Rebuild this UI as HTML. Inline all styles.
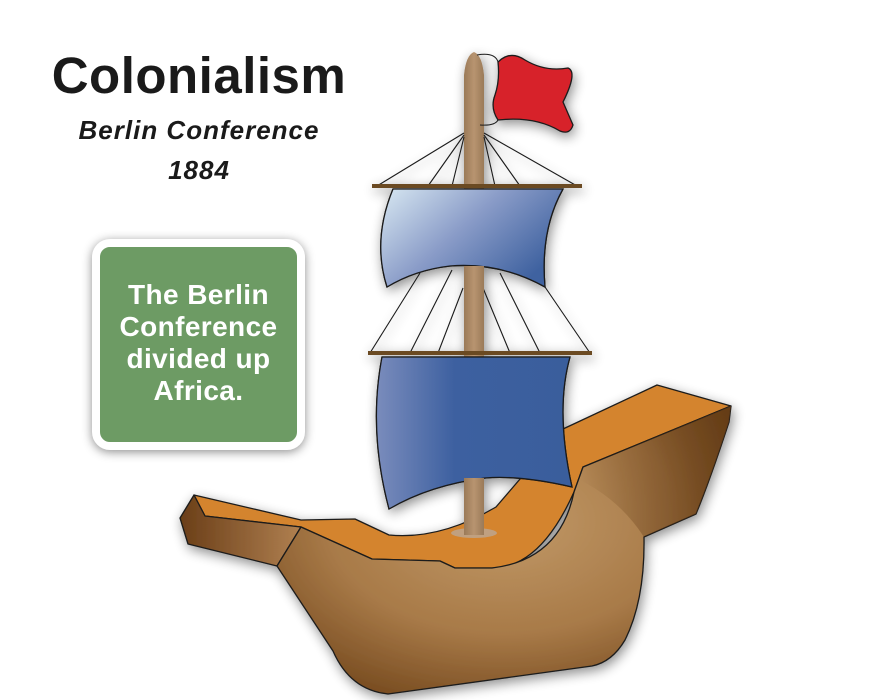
<!DOCTYPE html>
<html><head><meta charset="utf-8"><style>
html,body{margin:0;padding:0;background:#fff;width:884px;height:700px;overflow:hidden;font-family:"Liberation Sans",sans-serif}
.t{position:absolute;left:0;width:398px;text-align:center;color:#1a1a1a;font-weight:bold}
.box{position:absolute;left:92px;top:239px;width:197px;height:195px;border:8px solid #fff;border-radius:18px;background:#6d9b64;box-shadow:0 2px 10px rgba(0,0,0,.45);color:#fff;font-weight:bold;font-size:28px;letter-spacing:0.4px;line-height:32px;text-align:center;box-sizing:content-box}
</style></head><body>
<div class="t" style="top:46px;font-size:51px;letter-spacing:0.5px">Colonialism</div>
<div class="t" style="top:115px;font-size:26px;font-style:italic;letter-spacing:1px">Berlin Conference</div>
<div class="t" style="top:155px;font-size:26px;font-style:italic;letter-spacing:1px">1884</div>
<div class="box"><div style="padding-top:32px">The Berlin<br>Conference<br>divided up<br>Africa.</div></div>
<svg width="884" height="700" style="position:absolute;left:0;top:0">
<defs>
<filter id="sh" x="-20%" y="-20%" width="140%" height="140%"><feGaussianBlur in="SourceAlpha" stdDeviation="6"/><feOffset dx="2" dy="4"/><feComponentTransfer><feFuncA type="linear" slope="0.45"/></feComponentTransfer><feMerge><feMergeNode/><feMergeNode in="SourceGraphic"/></feMerge></filter>
<radialGradient id="hull" cx="0.5" cy="0.4" r="0.65"><stop offset="0" stop-color="#c29a68"/><stop offset="0.6" stop-color="#a87a48"/><stop offset="1" stop-color="#7a4e22"/></radialGradient>
<linearGradient id="bow" x1="0" y1="0" x2="1" y2="0"><stop offset="0" stop-color="#6a3e18"/><stop offset="1" stop-color="#b08050"/></linearGradient>
<linearGradient id="stern" x1="0" y1="0" x2="1" y2="0"><stop offset="0" stop-color="#5e3712" stop-opacity="0"/><stop offset="1" stop-color="#5e3712" stop-opacity="0.8"/></linearGradient>
<linearGradient id="s1" x1="0" y1="0" x2="1" y2="0.6"><stop offset="0" stop-color="#d8e8f2"/><stop offset="0.5" stop-color="#8a9cc8"/><stop offset="1" stop-color="#3f62a0"/></linearGradient>
<linearGradient id="s2" x1="0" y1="0" x2="1" y2="0"><stop offset="0" stop-color="#7a8cbc"/><stop offset="0.4" stop-color="#3d60a0"/><stop offset="1" stop-color="#3a5e9c"/></linearGradient>
<linearGradient id="mast" x1="0" y1="0" x2="1" y2="0"><stop offset="0" stop-color="#9a7a58"/><stop offset="0.5" stop-color="#b89470"/><stop offset="1" stop-color="#9a7a58"/></linearGradient>
</defs>
<g filter="url(#sh)" stroke="#1a1a1a" stroke-width="1.3" stroke-linejoin="round">
<path d="M194,495 L301,520 L355,519 L389,535 Q440,540 496,507 L563,429 L657,385 L731,406 L583,467 L574,492 Q540,568 492,568 L455,568 L440,561 L372,559 L301,527 L205,516 Z" fill="#d4842e"/>
<path d="M205,516 L301,527 L277,566 L188,544 L180,518 L194,495 Z" fill="url(#bow)"/>
<path d="M301,527 L372,559 L440,561 L455,568 L492,568 Q560,560 574,492 L583,467 L731,406 L729,422 Q710,480 696,514 L644,537 Q645,600 625,640 Q612,662 592,666 L388,694 Q350,690 333,651 L277,566 Z" fill="url(#hull)"/>
<path d="M583,467 L731,406 L729,422 Q710,480 696,514 L644,537 Q620,500 580,480 Z" fill="url(#stern)" stroke="none"/>
<ellipse cx="474" cy="533" rx="23" ry="5" fill="#c0a080" stroke="none"/>
<path d="M464,535 L464,75 Q466,55 474,52 Q482,55 484,75 L484,535 Z" fill="url(#mast)" stroke="none"/>
<path d="M477,55 Q495,52 498,62 M480,125 Q495,126 498,120" fill="none" stroke-width="1"/>
<path d="M498,62 Q510,50 525,60 Q545,72 568,68 Q578,72 563,102 Q570,118 573,125 Q570,135 560,131 Q535,116 498,120 Q490,108 495,95 Q500,80 498,62 Z" fill="#d7232b"/>
<g stroke-width="1.1" fill="none">
<path d="M464,133 L377,186 M464,135 L428,186 M464,137 L452,186 M484,133 L577,186 M484,135 L520,186 M484,137 L495,186"/>
<path d="M420,273 L370,353 M452,270 L410,353 M463,288 L438,353 M483,288 L510,353 M500,273 L540,353 M545,287 L590,353"/>
</g>
<path d="M393,189 L563,189 Q540,230 545,287 Q500,262 450,266 Q415,270 387,287 Q372,240 393,189 Z" fill="url(#s1)"/>
<path d="M382,357 L570,357 Q555,410 572,487 Q520,475 485,478 Q430,485 389,509 Q368,430 382,357 Z" fill="url(#s2)"/>
<rect x="372" y="184" width="210" height="4" fill="#6b4a22" stroke="none"/>
<rect x="368" y="351" width="224" height="4" fill="#6b4a22" stroke="none"/>
</g>
<path d="M382,357 L570,357 Q555,410 572,487 Q520,475 485,478 Q430,485 389,509 Q368,430 382,357 Z" fill="url(#s2)" stroke="#1a1a1a" stroke-width="1.3"/>
<rect x="368" y="351" width="224" height="4" fill="#6b4a22"/>
<path d="M393,189 L563,189 Q540,230 545,287 Q500,262 450,266 Q415,270 387,287 Q372,240 393,189 Z" fill="url(#s1)" stroke="#1a1a1a" stroke-width="1.3"/>
<rect x="464" y="266" width="20" height="85" fill="url(#mast)"/>
<rect x="372" y="184" width="210" height="4" fill="#6b4a22"/>
<rect x="464" y="478" width="20" height="57" fill="url(#mast)"/>
</svg>
</body></html>
